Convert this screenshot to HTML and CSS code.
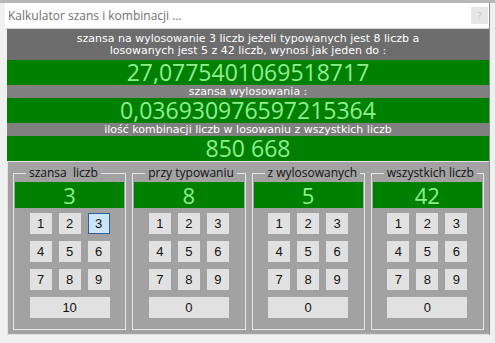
FILE: index.html
```html
<!DOCTYPE html>
<html lang="pl">
<head>
    <meta charset="UTF-8">
    <title>Kalkulator szans i kombinacji</title>
    <link rel="stylesheet" href="styles.css">
</head>
<body>
    <div class="topbar"></div>
    <div class="window">
        <div class="titlebar">
            <span class="title">Kalkulator szans i kombinacji ...</span>
            <span class="help">?</span>
        </div>
        <div class="panel">
            <div class="info">szansa na wylosowanie 3 liczb jeżeli typowanych jest 8 liczb a<br>losowanych jest 5 z 42 liczb, wynosi jak jeden do :</div>
            <div class="value">27,0775401069518717</div>
            <div class="caption">szansa wylosowania :</div>
            <div class="value">0,036930976597215364</div>
            <div class="caption">ilość kombinacji liczb w losowaniu z wszystkich liczb</div>
            <div class="value">850 668</div>

            <div class="groups">
                <fieldset class="group">
                    <legend>szansa&nbsp; liczb</legend>
                    <div class="display">3</div>
                    <div class="keys">
                        <button class="key">1</button>
                        <button class="key">2</button>
                        <button class="key on">3</button>
                        <button class="key">4</button>
                        <button class="key">5</button>
                        <button class="key">6</button>
                        <button class="key">7</button>
                        <button class="key">8</button>
                        <button class="key">9</button>
                        <button class="key wide">10</button>
                    </div>
                </fieldset>
                <fieldset class="group">
                    <legend>przy typowaniu</legend>
                    <div class="display">8</div>
                    <div class="keys">
                        <button class="key">1</button>
                        <button class="key">2</button>
                        <button class="key">3</button>
                        <button class="key">4</button>
                        <button class="key">5</button>
                        <button class="key">6</button>
                        <button class="key">7</button>
                        <button class="key">8</button>
                        <button class="key">9</button>
                        <button class="key wide">0</button>
                    </div>
                </fieldset>
                <fieldset class="group">
                    <legend>z wylosowanych</legend>
                    <div class="display">5</div>
                    <div class="keys">
                        <button class="key">1</button>
                        <button class="key">2</button>
                        <button class="key">3</button>
                        <button class="key">4</button>
                        <button class="key">5</button>
                        <button class="key">6</button>
                        <button class="key">7</button>
                        <button class="key">8</button>
                        <button class="key">9</button>
                        <button class="key wide">0</button>
                    </div>
                </fieldset>
                <fieldset class="group">
                    <legend>wszystkich liczb</legend>
                    <div class="display">42</div>
                    <div class="keys">
                        <button class="key">1</button>
                        <button class="key">2</button>
                        <button class="key">3</button>
                        <button class="key">4</button>
                        <button class="key">5</button>
                        <button class="key">6</button>
                        <button class="key">7</button>
                        <button class="key">8</button>
                        <button class="key">9</button>
                        <button class="key wide">0</button>
                    </div>
                </fieldset>
            </div>
        </div>
    </div>
</body>
</html>
```

FILE: styles.css
```css
body {
    margin: 0;
    background: #f0f0f0;
    font-family: 'Open Sans', sans-serif;
    overflow: hidden;
}
.topbar {
    height: 3px;
    background: #b7b7b7;
}
.window {
    margin-left: 5px;
    width: 484px;
    border-right: 1px solid #8c8c8c;
}
.titlebar {
    height: 25px;
    background: #fff;
    border-bottom: 1px solid #d6d6d6;
    display: flex;
    align-items: center;
    justify-content: space-between;
    padding-left: 3px;
}
.title {
    font-size: 12px;
    color: #707070;
}
.help {
    width: 17px;
    height: 17px;
    margin-right: 1px;
    background: #e6e6e6;
    color: #c4c4c4;
    font-size: 9px;
    text-align: center;
    line-height: 17px;
}
.panel {
    margin-left: 2px;
}
.info {
    height: 31px;
    background: #6d6d6d;
    color: #fff;
    font-family: 'DejaVu Sans', sans-serif;
    font-size: 11px;
    line-height: 12px;
    text-align: center;
    display: flex;
    align-items: center;
    justify-content: center;
}
.value {
    height: 25px;
    background: #008000;
    color: #90ee90;
    font-size: 23px;
    line-height: 25px;
    text-align: center;
}
.caption {
    height: 13px;
    background: #808080;
    color: #fff;
    font-family: 'DejaVu Sans', sans-serif;
    font-size: 11px;
    line-height: 13px;
    text-align: center;
}
.groups {
    border-top: 1px solid #e2e2e2;
    border-left: 1px solid #e2e2e2;
    border-bottom: 1px solid #e2e2e2;
    background: #a2a2a2;
    padding: 4px 5px 4px 5px;
    display: grid;
    grid-template-columns: repeat(4, 1fr);
    gap: 6px;
}
.group {
    margin: 0;
    min-width: 0;
    padding: 2px 1px 11px 1px;
    border: 1px solid #e4e4e4;
}
.group legend {
    margin-left: 11px;
    padding: 0 3px;
    font-size: 12px;
    line-height: 14px;
    color: #111;
}
.display {
    height: 26px;
    background: #008000;
    color: #90ee90;
    font-size: 22px;
    line-height: 26px;
    text-align: center;
}
.keys {
    margin-top: 5px;
    display: grid;
    grid-template-columns: repeat(3, 22px);
    grid-auto-rows: 21px;
    gap: 7px;
    justify-content: center;
}
.key {
    box-sizing: border-box;
    padding: 0;
    border: none;
    background: #e1e1e1;
    font-family: 'Liberation Sans', sans-serif;
    font-size: 13px;
    color: #111;
}
.key.on {
    background: #cce4f7;
    border: 1px solid #2a62a0;
}
.key.wide {
    grid-column: 1 / -1;
}
```
